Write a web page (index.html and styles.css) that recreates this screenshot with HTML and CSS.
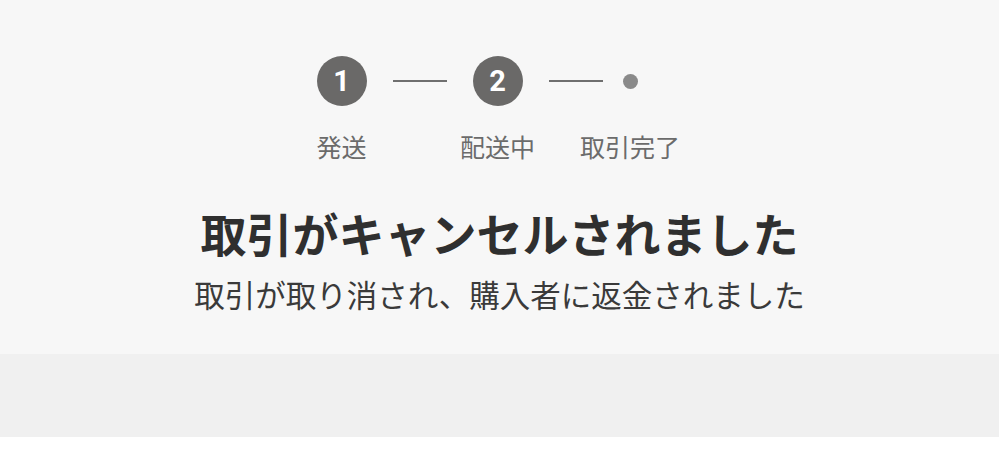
FILE: index.html
```html
<!DOCTYPE html>
<html lang="ja">
<head>
<meta charset="utf-8">
<title>取引状況</title>
<link rel="stylesheet" href="styles.css">
</head>
<body>
<section class="status">
  <div class="stepper">
    <div class="marker"><span class="num">1</span></div>
    <div class="link"><span class="bar"></span></div>
    <div class="marker"><span class="num">2</span></div>
    <div class="link"><span class="bar"></span></div>
    <div class="end"><span class="dot"></span></div>
    <div class="label col-1"><span>発送</span></div>
    <div class="label col-3"><span>配送中</span></div>
    <div class="label col-5"><span>取引完了</span></div>
  </div>
  <h1 class="title">取引がキャンセルされました</h1>
  <p class="note">取引が取り消され、購入者に返金されました</p>
</section>
<div class="band"></div>
</body>
</html>
```
FILE: styles.css
```css
html, body {
  margin: 0;
  padding: 0;
  background: #ffffff;
  font-family: "Noto Sans CJK JP", "Noto Sans", sans-serif;
}

.status {
  background: #f7f7f7;
  height: 354px;
  box-sizing: border-box;
  padding-top: 56px;
  display: flex;
  flex-direction: column;
  align-items: center;
}

/* three steps on a grid; the labels may overflow their narrow columns */
.stepper {
  display: grid;
  grid-template-columns: 50px 106px 50px 100px 15px;
  grid-template-rows: 50px auto;
  align-items: center;
  padding-right: 45px;
}

.marker {
  width: 50px;
  height: 50px;
  border-radius: 50%;
  background: #6a6968;
  color: #ffffff;
  display: flex;
  align-items: center;
  justify-content: center;
}

.num {
  font-family: "Roboto", "Liberation Sans", sans-serif;
  font-weight: 700;
  font-size: 29px;
  line-height: 1;
}

.link {
  display: flex;
}

.bar {
  display: block;
  width: 54px;
  height: 2px;
  margin-left: 26px;
  background: #6f6f6f;
}

.end {
  display: flex;
  justify-content: center;
}

.dot {
  display: block;
  width: 15px;
  height: 15px;
  border-radius: 50%;
  background: #8a8a8a;
}

.label {
  grid-row: 2;
  display: flex;
  justify-content: center;
  margin-top: 22px;
  font-size: 25px;
  line-height: 36px;
  color: #6b6b6b;
  white-space: nowrap;
}

.col-1 { grid-column: 1; }
.col-3 { grid-column: 3; }
.col-5 { grid-column: 5; }

.title {
  margin: 38px 0 0;
  font-size: 46px;
  font-weight: 700;
  line-height: 60px;
  color: #2f2f2f;
}

.note {
  margin: 12px 0 0;
  font-size: 30.5px;
  line-height: 40px;
  color: #3a3a3a;
}

.band {
  height: 83px;
  background: #f0f0f0;
}
```
